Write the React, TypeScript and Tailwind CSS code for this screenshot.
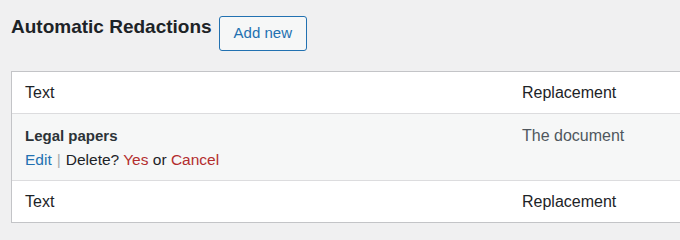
const rows = [
  { text: "Text", replacement: "Replacement", kind: "head" },
  { text: "Legal papers", replacement: "The document", kind: "entry" },
  { text: "Text", replacement: "Replacement", kind: "foot" },
];

function Row({ text, replacement, kind }: { text: string; replacement: string; kind: string }) {
  if (kind === "entry") {
    return (
      <div className="grid grid-cols-[497px_1fr] border-b border-[#dcdcde] bg-[#f6f7f7] pt-[10px] pb-[8px] leading-[24px]">
        <div className="px-[13px]">
          <div className="text-[15px] font-bold text-[#2c3338]">{text}</div>
          <div className="text-[15.5px] text-[#1d2327]">
            <a className="text-[#2271b1]">Edit</a>
            <span className="px-[5px] text-[#a7aaad]">|</span>
            Delete? <a className="text-[#b32d2e]">Yes</a> or{" "}
            <a className="text-[#b32d2e]">Cancel</a>
          </div>
        </div>
        <div className="px-[13px] text-[16px] text-[#50575e]">{replacement}</div>
      </div>
    );
  }
  return (
    <div
      className={
        kind === "head"
          ? "grid h-[42px] grid-cols-[497px_1fr] items-center border-b border-[#dcdcde] text-[16px] leading-[24px] text-[#1d2327]"
          : "grid h-[41px] grid-cols-[497px_1fr] items-center text-[16px] leading-[24px] text-[#1d2327]"
      }
    >
      <div className="px-[13px]">{text}</div>
      <div className="px-[13px]">{replacement}</div>
    </div>
  );
}

export default function App() {
  return (
    <div className="h-[240px] w-[680px] overflow-hidden bg-[#f0f0f1] font-['Liberation_Sans',Arial,sans-serif]">
      <div className="flex items-start pl-[11px] pt-[15px]">
        <h1 className="text-[19px] font-bold leading-[23px] text-[#1d2327]">Automatic Redactions</h1>
        <button className="ml-[7px] mt-[1px] h-[35px] rounded-[3px] border border-[#2271b1] bg-[#f6f7f7] px-[14px] text-[15px] text-[#2271b1]">
          Add new
        </button>
      </div>
      <div className="ml-[11px] mt-[20px] w-[700px] border border-[#c3c4c7] bg-white">
        {rows.map((r, i) => (
          <Row key={i} {...r} />
        ))}
      </div>
    </div>
  );
}
